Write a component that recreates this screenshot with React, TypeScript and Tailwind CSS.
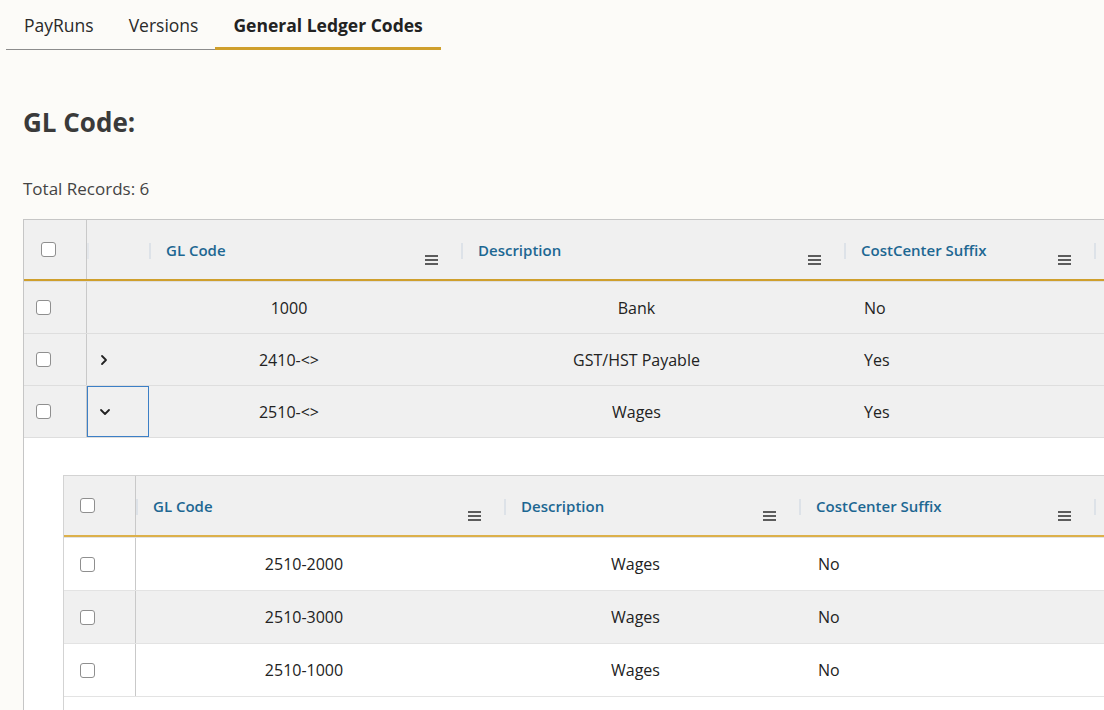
import { ReactNode } from 'react';

type Row = { code: string; description: string; suffix: string; expander?: 'closed' | 'open' };

const outerRows: Row[] = [
  { code: '1000', description: 'Bank', suffix: 'No' },
  { code: '2410-<>', description: 'GST/HST Payable', suffix: 'Yes', expander: 'closed' },
  { code: '2510-<>', description: 'Wages', suffix: 'Yes', expander: 'open' },
];

const childRows: Row[] = [
  { code: '2510-2000', description: 'Wages', suffix: 'No' },
  { code: '2510-3000', description: 'Wages', suffix: 'No' },
  { code: '2510-1000', description: 'Wages', suffix: 'No' },
];

function Checkbox() {
  return <span className="block h-[15px] w-[15px] rounded-[3px] border-[1.5px] border-[#8f8f8f] bg-white" />;
}

function MenuIcon() {
  return (
    <svg viewBox="0 0 13 10" className="h-[10px] w-[13px]" fill="none">
      <path d="M0 1h13M0 5h13M0 9h13" stroke="#2b2b2b" strokeWidth="1.4" />
    </svg>
  );
}

function Chevron({ open }: { open: boolean }) {
  return (
    <svg viewBox="0 0 12 12" className="h-[12px] w-[12px]" fill="none">
      <path
        d={open ? 'M2 4l4 4 4-4' : 'M4 2l4 4-4 4'}
        stroke="#222"
        strokeWidth="1.8"
        strokeLinecap="round"
        strokeLinejoin="round"
      />
    </svg>
  );
}

function HeaderCell({ label, width, menu = true }: { label: string; width: string; menu?: boolean }) {
  return (
    <div className={`flex shrink-0 items-start ${width}`}>
      <span className="mt-[23px] h-[16px] w-[2px] shrink-0 bg-[#dde2e8]" />
      <span className="ml-[15px] mt-[20px] text-[15px] font-semibold leading-[20px] text-[#1d6792]">{label}</span>
      <span className="flex-1" />
      {menu && (
        <span className="mr-[23px] mt-[35px]">
          <MenuIcon />
        </span>
      )}
    </div>
  );
}

function GridTable({ rows, header, children }: { rows: ReactNode[]; header: ReactNode; children?: ReactNode }) {
  return (
    <div className="w-full">
      {header}
      {rows}
      {children}
    </div>
  );
}

export default function App() {
  const outerHeader = (
    <div className="flex h-[61px] border-b-[2.5px] border-[#cf9f2c] bg-[#f0f0f0]">
      <div className="flex w-[63px] shrink-0 items-center border-r border-[#c9c9c9] pl-[17px]">
        <Checkbox />
      </div>
      <div className="flex w-[62px] shrink-0 items-start">
        <span className="mt-[23px] h-[16px] w-[2px] bg-[#e4e7eb]" />
      </div>
      <HeaderCell label="GL Code" width="w-[312px]" />
      <HeaderCell label="Description" width="w-[383px]" />
      <HeaderCell label="CostCenter Suffix" width="w-[250px]" />
      <HeaderCell label="" width="w-[200px]" menu={false} />
    </div>
  );

  const childHeader = (
    <div className="flex h-[61px] border-b-2 border-[#dcb04a] bg-[#f0f0f0]">
      <div className="flex w-[72px] shrink-0 items-center border-r border-[#c9c9c9] pl-[16px]">
        <Checkbox />
      </div>
      <HeaderCell label="GL Code" width="w-[368px]" />
      <HeaderCell label="Description" width="w-[295px]" />
      <HeaderCell label="CostCenter Suffix" width="w-[295px]" />
      <HeaderCell label="" width="w-[200px]" menu={false} />
    </div>
  );

  return (
    <div
      className="h-[710px] w-[1104px] overflow-hidden bg-[#fcfbf8] text-[#222]"
      style={{ fontFamily: '"Open Sans", "Noto Sans", sans-serif' }}
    >
      <nav className="ml-[6px] flex h-[50px] items-end">
        <div className="border-b border-[#8c8c8c] px-[18px] pb-[12px] text-[17.5px] leading-[24px] text-[#2a2a2a]">PayRuns</div>
        <div className="border-b border-[#8c8c8c] px-[17px] pb-[12px] text-[17.5px] leading-[24px] text-[#2a2a2a]">Versions</div>
        <div className="border-b-[3px] border-[#cf9f2c] px-[18px] pb-[10px] text-[17.5px] font-bold leading-[24px] text-[#222]">
          General Ledger Codes
        </div>
      </nav>

      <div className="pl-[23px]">
        <h1 className="mt-[55px] text-[26px] font-bold leading-[34px] text-[#3a3a3a]">GL Code:</h1>
        <p className="mt-[38px] text-[17px] leading-[24px] text-[#444]">Total Records: 6</p>

        <div className="mt-[18px] w-[1300px] border-l border-t border-[#c6c6c6]">
          <GridTable
            header={outerHeader}
            rows={outerRows.map((row) => (
              <div key={row.code} className="flex h-[52px] border-t border-[#dedede] bg-[#f0f0f0] text-[16px]">
                <div className="flex w-[63px] shrink-0 items-center border-r border-[#c9c9c9] pl-[12px]">
                  <Checkbox />
                </div>
                <div className="flex w-[62px] shrink-0">
                  {row.expander === 'open' ? (
                    <span className="flex h-full w-full items-center border border-[#3c7fc6] pl-[11px]">
                      <Chevron open />
                    </span>
                  ) : row.expander === 'closed' ? (
                    <span className="flex h-full w-full items-center pl-[11px]">
                      <Chevron open={false} />
                    </span>
                  ) : null}
                </div>
                <div className="flex w-[312px] shrink-0 items-center justify-center pr-[32px]">{row.code}</div>
                <div className="flex w-[383px] shrink-0 items-center justify-center pr-[32px]">{row.description}</div>
                <div className="flex w-[250px] shrink-0 items-center pl-[20px]">{row.suffix}</div>
              </div>
            ))}
          >
            <div className="h-[300px] border-t border-[#dedede] bg-white pl-[39px] pt-[37px]">
              <div className="border-l border-t border-[#d3d3d3]">
                <GridTable
                  header={childHeader}
                  rows={childRows.map((row, index) => (
                    <div
                      key={row.code}
                      className={`flex h-[53px] border-t border-[#e3e3e3] text-[16px] ${index % 2 === 1 ? 'bg-[#f0f0f0]' : 'bg-white'}`}
                    >
                      <div className="flex w-[72px] shrink-0 items-center border-r border-[#c9c9c9] pl-[16px]">
                        <Checkbox />
                      </div>
                      <div className="flex w-[368px] shrink-0 items-center justify-center pr-[32px]">{row.code}</div>
                      <div className="flex w-[295px] shrink-0 items-center justify-center pr-[32px]">{row.description}</div>
                      <div className="flex w-[295px] shrink-0 items-center pl-[19px]">{row.suffix}</div>
                    </div>
                  ))}
                >
                  <div className="h-[40px] border-t border-[#e3e3e3] bg-white" />
                </GridTable>
              </div>
            </div>
          </GridTable>
        </div>
      </div>
    </div>
  );
}
